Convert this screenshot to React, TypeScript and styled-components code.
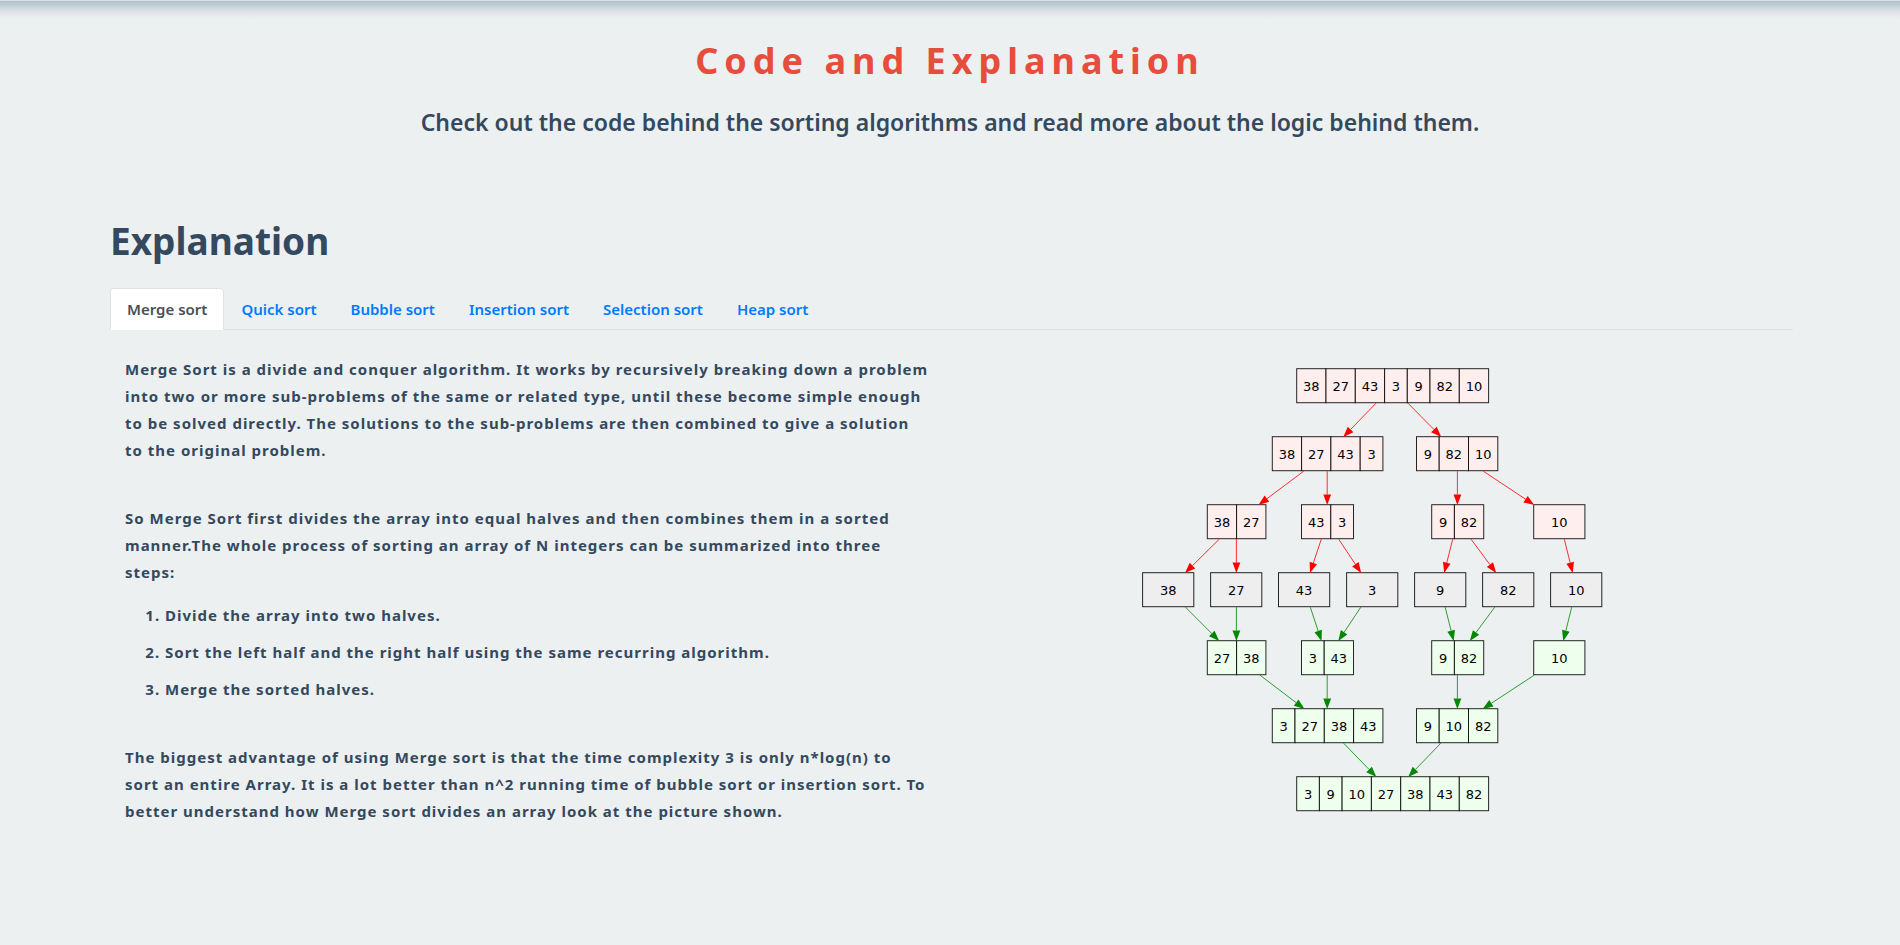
import React, { useState } from 'react';
import styled, { createGlobalStyle } from 'styled-components';

const GlobalStyle = createGlobalStyle`
  *, *::before, *::after { box-sizing: border-box; }
  body {
    margin: 0;
    background: #ecf0f1;
    color: #34495e;
    font-family: "Noto Sans", "Open Sans", sans-serif;
    font-size: 15px;
  }
`;

const Page = styled.main`
  min-height: 100vh;
`;

const TopShade = styled.div`
  height: 20px;
  border-top: 1px solid #dadfdf;
  background: linear-gradient(#b1c1cc, #c3cfd7 25%, #dbe2e6 55%, #e8edee 80%, #ecf0f1);
`;

const Header = styled.header`
  padding: 17px 16px 77px;
  text-align: center;
`;

const Title = styled.h1`
  margin: 0 0 19px;
  color: #e74c3c;
  font-size: 36px;
  font-weight: 700;
  line-height: 48px;
  letter-spacing: 6px;
`;

const Subtitle = styled.p`
  margin: 0;
  font-size: 23px;
  font-weight: 600;
  line-height: 36px;
`;

const Section = styled.section`
  margin: 0 107px 0 110px;
`;

const SectionTitle = styled.h2`
  margin: 0 0 23px;
  font-size: 37px;
  font-weight: 700;
  line-height: 48px;
`;

const TabBar = styled.div`
  display: flex;
  border-bottom: 1px solid #dee2e6;
`;

const Tab = styled.button<{ $active: boolean }>`
  margin: 0 0 -1px;
  padding: 8px 16px;
  border: 1px solid;
  border-color: ${(p) => (p.$active ? '#dee2e6 #dee2e6 #fff' : 'transparent')};
  border-radius: 4px 4px 0 0;
  background: ${(p) => (p.$active ? '#fff' : 'transparent')};
  color: ${(p) => (p.$active ? '#495057' : '#007bff')};
  font: inherit;
  font-weight: 600;
  line-height: 24px;
  cursor: pointer;
`;

const Panel = styled.div`
  display: grid;
  grid-template-columns: 1fr 1fr;
  padding-top: 26px;
`;

const Column = styled.div`
  padding: 0 22px 0 15px;
  font-weight: 700;
  line-height: 27px;
  letter-spacing: 1px;
`;

const Paragraph = styled.p`
  margin: 0 0 16px;
`;

const SpacedParagraph = styled(Paragraph)`
  margin-bottom: 41px;
`;

const Steps = styled.ol`
  margin: 0 0 41px;
  padding-left: 40px;
`;

const Step = styled.li`
  & + & { margin-top: 10px; }
`;

const Figure = styled.figure`
  display: flex;
  justify-content: center;
  align-items: flex-start;
  margin: 8px 0 0;
`;

const Diagram = styled.svg`
  width: 472px;
  max-width: 100%;
  height: auto;
  font-family: "DejaVu Sans", sans-serif;
  font-size: 13px;
  font-weight: 400;
  text-anchor: middle;
`;

const tabs = ['Merge sort', 'Quick sort', 'Bubble sort', 'Insertion sort', 'Selection sort', 'Heap sort'];

const SPLIT = '#ffeeee';
const SINGLE = '#eeeeee';
const MERGED = '#eeffee';
const ROW_PITCH = 68;
const BOX_HEIGHT = 34;

/* Each row: fill colour and its arrays, given as [left edge, values]. */
const rows: { fill: string; arrays: [number, number[]][] }[] = [
  { fill: SPLIT, arrays: [[160.7, [38, 27, 43, 3, 9, 82, 10]]] },
  { fill: SPLIT, arrays: [[136.3, [38, 27, 43, 3]], [280.5, [9, 82, 10]]] },
  { fill: SPLIT, arrays: [[71.3, [38, 27]], [165.5, [43, 3]], [295.7, [9, 82]], [397.7, [10]]] },
  { fill: SINGLE, arrays: [[6.6, [38]], [74.6, [27]], [142.5, [43]], [210.6, [3]], [278.6, [9]], [346.6, [82]], [414.6, [10]]] },
  { fill: MERGED, arrays: [[71.3, [27, 38]], [165.5, [3, 43]], [295.7, [9, 82]], [397.7, [10]]] },
  { fill: MERGED, arrays: [[136.3, [3, 27, 38, 43]], [280.5, [9, 10, 82]]] },
  { fill: MERGED, arrays: [[160.7, [3, 9, 10, 27, 38, 43, 82]]] },
];

/* Arrows below each row: [x at the row's foot, x at the next row's top]. */
const arrows: [number, number][][] = [
  [[240, 207.3], [272, 305.3]],
  [[167.7, 122.5], [191.2, 191.2], [321.4, 321.4], [347.3, 398.3]],
  [[83.2, 49], [100.4, 100.4], [185.3, 174], [202.7, 225.2], [316.7, 308.2], [335, 360.2], [428.3, 436.7]],
  [[49.5, 83.2], [100.4, 100.4], [174.3, 185.5], [224.8, 202.3], [309.2, 317.7], [358.7, 333.8], [435.7, 427.3]],
  [[124, 168.5], [191.2, 191.2], [321.4, 321.4], [398.2, 346.6]],
  [[207.6, 240.4], [304.8, 272.2]],
];

const rowTop = (row: number) => 4.7 + row * ROW_PITCH;

function ArrayBox({ x, y, fill, values }: { x: number; y: number; fill: string; values: number[] }) {
  let left = x;
  return (
    <g>
      {values.map((value, i) => {
        const width = values.length === 1 ? 51.2 : value > 9 ? 29.3 : 22.7;
        const cellX = left;
        left += width;
        return (
          <g key={i}>
            <rect x={cellX} y={y} width={width} height={BOX_HEIGHT} fill={fill} stroke="#000" strokeOpacity={0.85} />
            <text x={cellX + width / 2} y={y + 22}>{value}</text>
          </g>
        );
      })}
    </g>
  );
}

function Arrow({ from, to, row, color }: { from: number; to: number; row: number; color: string }) {
  const y1 = rowTop(row) + BOX_HEIGHT + 0.5;
  const y2 = rowTop(row + 1) + 0.3;
  const length = Math.hypot(to - from, y2 - y1);
  const ux = (to - from) / length;
  const uy = (y2 - y1) / length;
  const bx = to - ux * 10.5;
  const by = y2 - uy * 10.5;
  return (
    <g>
      <line x1={from} y1={y1} x2={bx} y2={by} stroke={color} strokeWidth={1} strokeOpacity={0.8} />
      <polygon
        points={`${to},${y2} ${bx - uy * 3.9},${by + ux * 3.9} ${bx + uy * 3.9},${by - ux * 3.9}`}
        fill={color}
      />
    </g>
  );
}

function MergeSortDiagram() {
  return (
    <Diagram viewBox="0 0 472 454" role="img" aria-label="Merge sort splitting and merging an array">
      {rows.map((row, r) =>
        row.arrays.map(([x, values], i) => (
          <ArrayBox key={`${r}-${i}`} x={x} y={rowTop(r)} fill={row.fill} values={values} />
        )),
      )}
      {arrows.map((group, r) =>
        group.map(([from, to], i) => (
          <Arrow key={`${r}-${i}`} from={from} to={to} row={r} color={r < 3 ? '#ff0000' : '#008800'} />
        )),
      )}
    </Diagram>
  );
}

export default function App() {
  const [active, setActive] = useState(0);
  return (
    <Page>
      <GlobalStyle />
      <TopShade />
      <Header>
        <Title>Code and Explanation</Title>
        <Subtitle>
          Check out the code behind the sorting algorithms and read more about the logic behind them.
        </Subtitle>
      </Header>
      <Section>
        <SectionTitle>Explanation</SectionTitle>
        <TabBar role="tablist">
          {tabs.map((label, i) => (
            <Tab
              key={label}
              type="button"
              role="tab"
              id={`tab-${i}`}
              aria-selected={i === active}
              $active={i === active}
              onClick={() => setActive(i)}
            >
              {label}
            </Tab>
          ))}
        </TabBar>
        <Panel role="tabpanel" aria-labelledby={`tab-${active}`}>
          <Column>
            <SpacedParagraph>
              Merge Sort is a divide and conquer algorithm. It works by recursively breaking down a problem
              into two or more sub-problems of the same or related type, until these become simple enough to
              be solved directly. The solutions to the sub-problems are then combined to give a solution to
              the original problem.
            </SpacedParagraph>
            <Paragraph>
              So Merge Sort first divides the array into equal halves and then combines them in a sorted
              manner.The whole process of sorting an array of N integers can be summarized into three steps:
            </Paragraph>
            <Steps>
              <Step>Divide the array into two halves.</Step>
              <Step>Sort the left half and the right half using the same recurring algorithm.</Step>
              <Step>Merge the sorted halves.</Step>
            </Steps>
            <Paragraph>
              The biggest advantage of using Merge sort is that the time complexity 3 is only n*log(n) to
              sort an entire Array. It is a lot better than n^2 running time of bubble sort or insertion
              sort. To better understand how Merge sort divides an array look at the picture shown.
            </Paragraph>
          </Column>
          <Figure>
            <MergeSortDiagram />
          </Figure>
        </Panel>
      </Section>
    </Page>
  );
}
